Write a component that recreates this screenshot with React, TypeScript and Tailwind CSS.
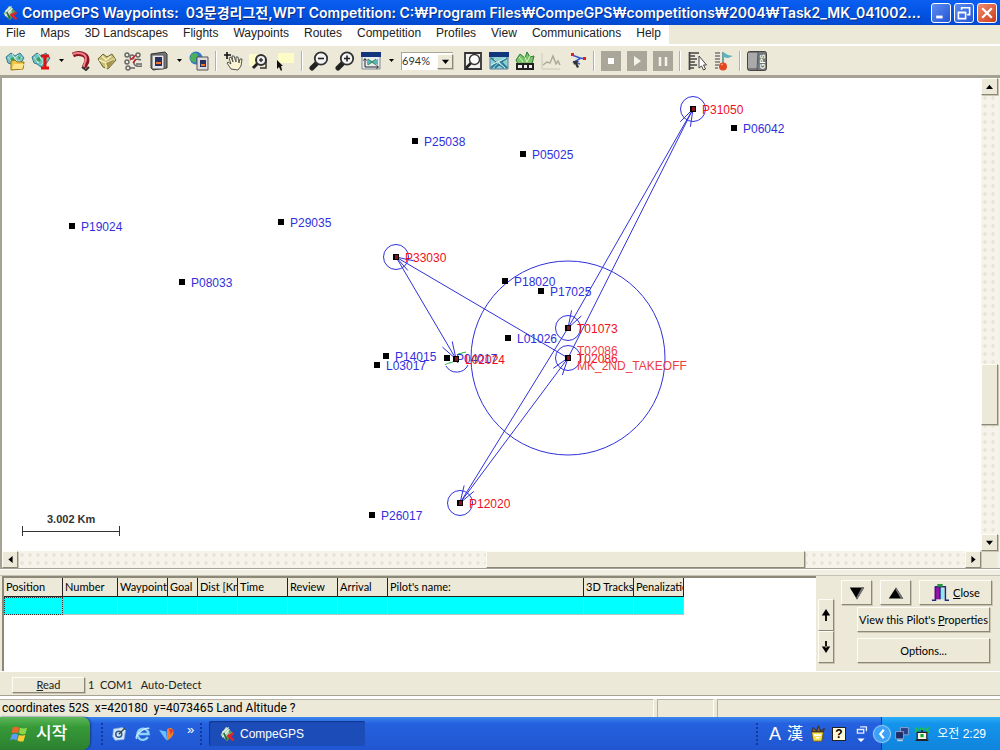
import type { ReactNode } from "react";
import { clsx } from "clsx";

type Waypoint = { name: string; x: number; y: number; turn?: boolean };
type Leg = { from: [number, number]; to: [number, number] };

const MENUS = [
  "File",
  "Maps",
  "3D Landscapes",
  "Flights",
  "Waypoints",
  "Routes",
  "Competition",
  "Profiles",
  "View",
  "Communications",
  "Help",
];

// Positions are in map units, measured from the top left of the map canvas
const WAYPOINTS: Waypoint[] = [
  { name: "P25038", x: 413, y: 63 },
  { name: "P05025", x: 521, y: 76 },
  { name: "P06042", x: 732, y: 50 },
  { name: "P19024", x: 70, y: 148 },
  { name: "P29035", x: 279, y: 144 },
  { name: "P08033", x: 180, y: 204 },
  { name: "P18020", x: 503, y: 203 },
  { name: "P17025", x: 539, y: 213 },
  { name: "L01026", x: 506, y: 260 },
  { name: "P14015", x: 384, y: 278 },
  { name: "L03017", x: 375, y: 287 },
  { name: "P04017", x: 445, y: 280 },
  { name: "P26017", x: 370, y: 437 },
  { name: "P31050", x: 691, y: 31, turn: true },
  { name: "P33030", x: 394, y: 179, turn: true },
  { name: "L02024", x: 454, y: 281, turn: true },
  { name: "T01073", x: 566, y: 250, turn: true },
  { name: "T02086", x: 566, y: 280, turn: true },
  { name: "P12020", x: 458, y: 425, turn: true },
];

const LEGS: Leg[] = [
  { from: [566, 280], to: [691, 31] },
  { from: [691, 31], to: [566, 250] },
  { from: [566, 250], to: [458, 425] },
  { from: [458, 425], to: [566, 280] },
  { from: [566, 280], to: [394, 179] },
  { from: [394, 179], to: [454, 281] },
];

const COLUMNS = [
  { title: "Position", width: "w-[59px]" },
  { title: "Number", width: "w-[55px]" },
  { title: "Waypoints", width: "w-[50px]" },
  { title: "Goal", width: "w-[30px]" },
  { title: "Dist [Km]", width: "w-[40px]" },
  { title: "Time", width: "w-[50px]" },
  { title: "Review", width: "w-[50px]" },
  { title: "Arrival", width: "w-[50px]" },
  { title: "Pilot's name:", width: "w-[196px]" },
  { title: "3D Tracks", width: "w-[50px]" },
  { title: "Penalization", width: "w-[50px]" },
];

const RAISED =
  "border border-t-[#fdfcf5] border-l-[#fdfcf5] border-r-[#8b8877] border-b-[#8b8877] bg-[#ece9d8] shadow-[1px_1px_0_#c9c5b2]";

const SMALL = "font-['Lato','Noto_Sans_CJK_KR',sans-serif] text-[11px]";

function Icon({ children, size = 20 }: { children: ReactNode; size?: number }) {
  return (
    <svg width={size} height={size} viewBox="0 0 20 20" fill="none" aria-hidden="true" className="shrink-0">
      {children}
    </svg>
  );
}

function Tool({ label, children }: { label: string; children: ReactNode }) {
  return (
    <button type="button" aria-label={label} className="flex h-6 w-[26px] shrink-0 items-center justify-center">
      <Icon>{children}</Icon>
    </button>
  );
}

function DropArrow({ label }: { label: string }) {
  return (
    <button type="button" aria-label={label} className="flex h-6 w-[14px] shrink-0 items-center justify-center">
      <svg width="5" height="3" viewBox="0 0 5 3" aria-hidden="true">
        <path d="M0 0h5L2.500 3z" fill="#000" />
      </svg>
    </button>
  );
}

function Separator() {
  return (
    <div className="flex w-2 shrink-0 justify-center">
      <div className="h-5 w-[2px] border-l border-[#b5b2a2] bg-white" />
    </div>
  );
}

function Triangle({ dir, size = 7 }: { dir: "up" | "down" | "left" | "right"; size?: number }) {
  const paths = {
    up: "M0 8.500L5 2.500l5 6z",
    down: "M0 2.500h10L5 8.500z",
    left: "M8 0v10L2 5z",
    right: "M2 0v10l6-5z",
  };
  return (
    <svg width={size} height={size} viewBox="0 0 10 10" aria-hidden="true">
      <path d={paths[dir]} fill="#000" />
    </svg>
  );
}

function MapSheet() {
  return (
    <>
      <path d="M1 6l5-4 4 3 5-3 4 5-4 6-5 3-4-3-3-1z" fill="#6fc3c0" stroke="#3a7890" />
      <path d="M3 6l5 6M7 3l7 10M13 4l-7 8M17 6l-7 8" stroke="#c9ecdc" />
      <path d="M5 8l3-2 2 3-2 2zM13 5l3 2-2 2z" fill="#3a9f54" />
    </>
  );
}

function Magnifier({ sign }: { sign: ReactNode }) {
  return (
    <>
      <path d="M7.500 12.500L3 17" stroke="#222" strokeWidth="5" strokeLinecap="round" />
      <circle cx="12" cy="7.500" r="6.200" fill="#f3f3f3" stroke="#333" strokeWidth="1.800" />
      <path d="M8 6a4 4 0 0 1 3-3" stroke="#fff" />
      {sign}
    </>
  );
}

function CompeLogo({ size = 16 }: { size?: number }) {
  return (
    <Icon size={size}>
      <path d="M9 1l9 8-8 10-8-8z" fill="#5aa060" />
      <path d="M9 1l4 8-6 7-5-5z" fill="#a9cfae" />
      <path d="M4 8l8-6M4 14l9-10" stroke="#f1f5ee" strokeWidth="1.500" />
      <path d="M11 11l7 7M18 9l-7 5" stroke="#e0242c" strokeWidth="3" />
      <path d="M6 9l4 8" stroke="#24663a" strokeWidth="2" />
    </Icon>
  );
}

function TitleBar() {
  const caption = "flex size-5 items-center justify-center rounded-[3px] border border-white";
  return (
    <header className="flex h-[25px] items-center gap-1 bg-linear-to-b from-[#0b5ff0] via-[#0254e4] to-[#0349cf] pr-[3px] pl-[2px]">
      <CompeLogo />
      <h1 className="min-w-0 flex-1 overflow-hidden font-['Inter','Noto_Sans_CJK_KR',sans-serif] text-[14px] leading-5 font-semibold whitespace-pre text-white [text-shadow:1px_1px_0_#0a2a80]">
        {"CompeGPS Waypoints:  03문경리그전,WPT Competition: C:₩Program Files₩CompeGPS₩competitions₩2004₩Task2_MK_041002..."}
      </h1>
      <div className="flex gap-[3px]">
        <button type="button" aria-label="Minimize" className={clsx(caption, "bg-linear-to-br from-[#5f8cf0] to-[#2454d6]")}>
          <Icon size={16}>
            <path d="M4 15h8" stroke="#fff" strokeWidth="3.500" />
          </Icon>
        </button>
        <button type="button" aria-label="Restore" className={clsx(caption, "bg-linear-to-br from-[#5f8cf0] to-[#2454d6]")}>
          <Icon size={16}>
            <path d="M7 6V3.500h10V12h-3M7 3.500h10" stroke="#fff" strokeWidth="2" />
            <path d="M3 9h9v8H3zM3 9.500h9" stroke="#fff" strokeWidth="2" />
          </Icon>
        </button>
        <button type="button" aria-label="Close window" className={clsx(caption, "bg-linear-to-br from-[#ef8a6c] to-[#cc3a14]")}>
          <Icon size={16}>
            <path d="M4 4l12 12M16 4L4 16" stroke="#fff" strokeWidth="2.800" />
          </Icon>
        </button>
      </div>
    </header>
  );
}

function MenuBar() {
  return (
    <nav className="flex h-[21px] border-b-2 border-white bg-[#ece9d8]">
      <div className="flex h-5 items-start gap-[15px] bg-white pr-2 pl-[6px] text-[12px] leading-4 text-[#222]">
        {MENUS.map((m) => (
          <button key={m} type="button" className="whitespace-nowrap">
            {m}
          </button>
        ))}
      </div>
    </nav>
  );
}

function Toolbar() {
  return (
    <div role="toolbar" className="flex h-8 items-center border-b-[3px] border-[#a5a294] bg-[#ece9d8] pl-[2px]">
      <Tool label="Open map">
        <MapSheet />
        <path d="M6 19V10l4-1 2 2h7l-1 7z" fill="#f3c64c" stroke="#9a741a" />
        <path d="M7 18l2-5h10l-2 5z" fill="#ffe48a" />
      </Tool>
      <Tool label="Map information">
        <MapSheet />
        <path d="M10 5h8M10 17h8M14 5v12" stroke="#e01010" strokeWidth="3" />
      </Tool>
      <DropArrow label="More maps" />
      <Tool label="Open track">
        <path d="M2 4c6-3 14-1 14 5 0 4-3 4-2 8" stroke="#8d1420" strokeWidth="5" />
        <path d="M2 3c6-2 13-1 13 5 0 4-3 5-2 8" stroke="#f0808a" strokeWidth="2" />
        <path d="M11 16l4 3 3-3" stroke="#333" strokeWidth="2" />
      </Tool>
      <Tool label="Open waypoints">
        <path d="M1 8l5-5 4 3 5-3 4 6-8 9-5-2z" fill="#c9bd72" stroke="#6e6530" />
        <path d="M2 9l7 3 9-4M9 12v6M5 5l4 4 5-4" stroke="#f6efc0" strokeWidth="1.500" />
        <path d="M9 12l9-4-7 10z" fill="#a3964a" />
      </Tool>
      <Tool label="Routes">
        <g stroke="#666" strokeWidth="1.400">
          <circle cx="4" cy="4" r="2" />
          <circle cx="9" cy="6" r="2" />
          <circle cx="4" cy="11" r="2" />
          <circle cx="5" cy="17" r="2" />
          <circle cx="15" cy="4" r="2" />
          <path d="M18 9c-5-2-7 0-7 3s4 4 8 3M13 13h6M7 17h5" />
        </g>
        <path d="M7 9l6-5M10 12l3-4" stroke="#d3202a" strokeWidth="1.500" />
      </Tool>
      <Tool label="3D view">
        <path d="M2 3l14-2 2 2v14l-14 2-2-2z" fill="#77777c" stroke="#333" />
        <path d="M3 4h12v14H3z" fill="#e6e6e6" stroke="#555" />
        <path d="M6 6h7v9H6z" fill="#29305c" />
        <path d="M7 12h5" stroke="#f07030" strokeWidth="2" />
      </Tool>
      <DropArrow label="More views" />
      <Tool label="Maps from internet">
        <circle cx="7" cy="7" r="6.500" fill="#3478c8" />
        <path d="M2 4c3-3 6-2 7 0s-3 3-2 6-5 1-6-2z" fill="#4cb05a" />
        <path d="M8 6h11v13H8z" fill="#dcdcdc" stroke="#555" />
        <path d="M11 9h6v7h-6z" fill="#29305c" />
        <path d="M12 14h4" stroke="#f07030" strokeWidth="2" />
      </Tool>
      <Separator />
      <Tool label="Pan">
        <path d="M8 18L4 12l1-1 3 2-2-6 2-1 2 5-1-6h2l2 6V6h2l1 6 1-4h2l-1 7-3 4z" fill="#fdf5d2" stroke="#555" />
        <path d="M4 1v7M1 4h7" stroke="#111" strokeWidth="1.600" />
      </Tool>
      <Tool label="Zoom window">
        <path d="M0 3h17v12H0z" fill="#fdfbc6" />
        <path d="M9 12l-5 5" stroke="#222" strokeWidth="3" />
        <circle cx="12" cy="9" r="5" fill="#eee" stroke="#333" strokeWidth="2" />
        <path d="M10 9h4M12 7v4M11 17h6V8" stroke="#333" strokeWidth="1.500" />
      </Tool>
      <Tool label="Select">
        <path d="M3 2h16v10H3z" fill="#fdfbc6" />
        <path d="M2 9v9l2-2 2 4 1-1-1-4h2z" fill="#111" />
      </Tool>
      <Separator />
      <Tool label="Zoom out">
        <Magnifier sign={<path d="M9 7.500h6" stroke="#222" strokeWidth="1.600" />} />
      </Tool>
      <Tool label="Zoom in">
        <Magnifier sign={<path d="M9 7.500h6M12 4.500v6" stroke="#222" strokeWidth="1.600" />} />
      </Tool>
      <Tool label="Scale window">
        <path d="M1 2h18v16H1z" fill="#e9edf0" stroke="#7d8794" />
        <path d="M0 1h20v5H0z" fill="#12357c" />
        <path d="M6 8l5 2 6-2v6l-6-2-5 2z" fill="#5cb3bb" />
        <path d="M7 8l8 6M15 8l-8 6" stroke="#3a8a50" />
        <path d="M4 8v8h13M2.500 9.500L4 7.500l1.500 2M15.500 14.500l2 1.500-2 1.500" stroke="#222" />
      </Tool>
      <DropArrow label="More scales" />
      <div className="relative mx-[3px] h-[18px] w-[52px] shrink-0">
        <select
          aria-label="Zoom level"
          defaultValue="694"
          className={clsx(SMALL, "block h-[18px] w-full appearance-none border-t border-l border-[#aaa795] bg-white leading-4 text-[#333]")}
        >
          <option value="694">694%</option>
          <option value="100">100%</option>
        </select>
        <span className={clsx(RAISED, "pointer-events-none absolute top-[2px] right-0 flex h-[15px] w-4 items-center justify-center")}>
          <Triangle dir="down" />
        </span>
      </div>
      <div className="w-1 shrink-0" />
      <Tool label="Fit to window">
        <path d="M2 2h16v16H2z" fill="#f1f1ee" stroke="#333" strokeWidth="1.800" />
        <path d="M8 12l-5 5" stroke="#222" strokeWidth="2.600" />
        <circle cx="11.500" cy="8.500" r="5" fill="#fff" stroke="#333" strokeWidth="1.400" />
      </Tool>
      <Tool label="Map window">
        <path d="M1 2h18v16H1z" fill="#8fd0d0" stroke="#5a7a9c" />
        <path d="M0 1h20v5H0z" fill="#12357c" />
        <path d="M2 7l6 4-6 6M18 7l-6 4 6 6M6 17l4-4 5 4" stroke="#2e7c9c" strokeWidth="2" />
        <path d="M2 14L17 7M5 8l11 9" stroke="#dff3ec" />
      </Tool>
      <Tool label="Send to device">
        <path d="M1 9l4-6 5 4 2-6 3 5 4-1-2 8H3z" fill="#7cc36a" stroke="#2f7a38" />
        <path d="M4 6l4 5M9 4l3 7M15 5l-3 6" stroke="#d8f3c8" />
        <path d="M1 12h18v7H1z" fill="#222" />
        <path d="M3 14h4v3H3zM9 14h3v3H9zM14 14h3v3h-3z" fill="#eee" />
      </Tool>
      <Tool label="Graph">
        <path d="M1 2v16h18" stroke="#c9c6b6" />
        <path d="M2 14l4-3 3 1 3-7 3 8 2-3 2 4" stroke="#aaa89a" strokeWidth="1.400" />
      </Tool>
      <Tool label="Edit route">
        <path d="M5 4l8 3 6 1M14 7l-7 4 6 2" stroke="#3658c8" strokeWidth="1.500" />
        <path d="M4 2h3v3H4zM16 6h3v3h-3z" fill="#e02020" />
        <path d="M6 10h6l-2 2 2 4-2 1-2-4-1 1z" fill="#333" />
      </Tool>
      <Separator />
      <Tool label="Stop">
        <path d="M0 0h20v20H0z" fill="#aaa79a" />
        <path d="M7 7h6v6H7z" fill="#fff" />
      </Tool>
      <Tool label="Play">
        <path d="M0 0h20v20H0z" fill="#aaa79a" />
        <path d="M7 5v10l7-5z" fill="#f4f3ea" />
      </Tool>
      <Tool label="Pause">
        <path d="M0 0h20v20H0z" fill="#aaa79a" />
        <path d="M7 6v9M13 6v9" stroke="#f4f3ea" strokeWidth="2.500" />
      </Tool>
      <Separator />
      <Tool label="Ruler">
        <path d="M2 2h10M2 5h6M2 8h8M2 11h6M2 14h8M2 17h5M2.500 1v18" stroke="#444" strokeWidth="1.700" />
        <path d="M12 5v12l2.500-2 2 4 2-1-2-4h3z" fill="#fff" stroke="#444" />
      </Tool>
      <Tool label="Flag marker">
        <path d="M2 2h5M2 5h5M2 8h5M2 11h5M2 14h4M2 17h3" stroke="#777" strokeWidth="1.500" />
        <path d="M10 1v14" stroke="#4a8a94" strokeWidth="1.500" />
        <path d="M10 1l5 3 5 1-5 2-5-1z" fill="#5bb4bc" />
        <circle cx="10" cy="15.500" r="4" fill="#e44820" />
        <path d="M8 14l2-1" stroke="#ffb89a" />
      </Tool>
      <Separator />
      <Tool label="GPS receiver">
        <rect x="0.500" y="0.500" width="19" height="19" rx="2" fill="#777" stroke="#444" />
        <path d="M1 2h10v15H1z" fill="#aaa" />
        <path d="M11 1l-1 18" stroke="#555" />
        <text x="3" y="18" fontSize="7" fontWeight="bold" fill="#fff" transform="rotate(-90 3 18) translate(0 15)">
          GPS
        </text>
      </Tool>
    </div>
  );
}

// Two short strokes folded back from the end of a leg
function arrowHead([x1, y1]: [number, number], [x2, y2]: [number, number]) {
  const angle = Math.atan2(y2 - y1, x2 - x1);
  const tip = (turn: number) =>
    `${x2 - 18 * Math.cos(angle + turn)} ${y2 - 18 * Math.sin(angle + turn)}`;
  return `M${tip(0.32)}L${x2} ${y2}L${tip(-0.32)}`;
}

function RouteMap() {
  return (
    <svg className="absolute inset-0 h-full w-full" role="img" aria-label="Competition task map" fontSize="12">
      <g fill="none" stroke="#3030dc">
        {LEGS.map(({ from, to }, i) => (
          <g key={i}>
            <path d={`M${from.join(" ")}L${to.join(" ")}`} />
            <path d={arrowHead(from, to)} />
          </g>
        ))}
        <circle cx="566" cy="280" r="97" />
        <circle cx="691" cy="31" r="12.500" />
        <circle cx="394" cy="179" r="12.500" />
        <circle cx="566" cy="250" r="12.500" />
        <circle cx="566" cy="280" r="12.500" />
        <circle cx="458" cy="425" r="12.500" />
        <path d="M444 288a12.500 12.500 0 0 0 22-1" />
        <path d="M443 287c3-3 7-1 10-5M456 276l8-2" stroke="#20b048" />
      </g>
      {WAYPOINTS.map(({ name, x, y, turn }) => (
        <g key={name}>
          <rect x={x - 3} y={y - 3} width="6" height="6" fill="#000" />
          {turn && <rect x={x - 1} y={y - 2} width="3" height="4" fill="#8c1420" />}
          <text x={x + 9} y={y + 5} fill={turn ? "#f01020" : "#3030dc"}>
            {name}
          </text>
        </g>
      ))}
      <g fill="#f03c44">
        <text x="575" y="277">T02086</text>
        <text x="575" y="292">MK_2ND_TAKEOFF</text>
      </g>
      {/* Scale bar */}
      <path d="M20 453.500h97M20.500 448v10M117.500 448v10" stroke="#333" fill="none" />
      <text x="45" y="445" fontSize="11" fontWeight="bold" fill="#333">
        3.002 Km
      </text>
    </svg>
  );
}

const TRACK = "bg-[#f5f3ea] bg-[radial-gradient(#eae7da_2px,transparent_2px)] bg-[size:8px_8px]";

function MapPanel() {
  return (
    <main className="grid min-h-[300px] flex-1 grid-cols-[1fr_17px] grid-rows-[1fr_17px] border-r-2 border-l-2 border-r-[#f4f2e8] border-l-[#a5a294] bg-[#ece9d8]">
      <div className="relative overflow-hidden bg-white">
        <RouteMap />
      </div>
      <div className={clsx("flex flex-col", TRACK)}>
        <button type="button" aria-label="Scroll up" className={clsx(RAISED, "flex h-[17px] items-center justify-center")}>
          <Triangle dir="up" />
        </button>
        <div className="flex-[271]" />
        <div className={clsx(RAISED, "flex-[59]")} />
        <div className="flex-[110]" />
        <button type="button" aria-label="Scroll down" className={clsx(RAISED, "flex h-[17px] items-center justify-center")}>
          <Triangle dir="down" />
        </button>
      </div>
      <div className={clsx("flex", TRACK)}>
        <button type="button" aria-label="Scroll left" className={clsx(RAISED, "flex w-4 items-center justify-center")}>
          <Triangle dir="left" />
        </button>
        <div className="flex-[469]" />
        <div className={clsx(RAISED, "flex-[318]")} />
        <div className="flex-[160]" />
        <button type="button" aria-label="Scroll right" className={clsx(RAISED, "flex w-4 items-center justify-center")}>
          <Triangle dir="right" />
        </button>
      </div>
    </main>
  );
}

function PilotTable() {
  return (
    <div className="min-w-0 flex-1 overflow-hidden border-t-2 border-l-2 border-[#8b8877] bg-white">
      <table className="w-[680px] table-fixed border-separate border-spacing-0 text-left">
        <thead>
          <tr className="bg-[#ece9d8]">
            {COLUMNS.map(({ title, width }) => (
              <th
                key={title}
                className={clsx(width, SMALL, "h-[19px] overflow-hidden border-r border-b border-[#222] p-0 pl-[2px] leading-4 font-normal whitespace-nowrap")}
              >
                {title}
              </th>
            ))}
          </tr>
        </thead>
        <tbody>
          <tr className="bg-[#00ffff]">
            {COLUMNS.map(({ title }, i) => (
              <td
                key={title}
                className={clsx("h-[18px] border-r border-b border-[#b0c4c4] p-0", i === 0 && "outline outline-dotted -outline-offset-1 outline-[#333]")}
              />
            ))}
          </tr>
        </tbody>
      </table>
    </div>
  );
}

function PilotPanel() {
  const button = clsx(RAISED, SMALL, "flex items-center justify-center leading-4");
  return (
    <section className="flex h-[104px] flex-col border-t border-b border-t-[#a5a294] border-b-white bg-[#ece9d8]">
      <div className="h-[7px] shrink-0 border-t border-b border-t-white border-b-[#c5c2b2] bg-[#f1efe4]" />
      <div className="flex min-h-0 flex-1 pr-2 pl-[2px]">
        <PilotTable />
        <div className="flex w-[25px] flex-col pt-[23px] pr-[7px] pl-[2px]">
          <button type="button" aria-label="Previous pilot" className={clsx(button, "h-8")}>
            <Icon size={12}>
              <path d="M10 0l7 11H3zM8.500 9h3v11h-3z" fill="#000" />
            </Icon>
          </button>
          <button type="button" aria-label="Next pilot" className={clsx(button, "h-8")}>
            <Icon size={12}>
              <path d="M10 20l7-11H3zM8.500 0h3v11h-3z" fill="#000" />
            </Icon>
          </button>
        </div>
        <div className="flex w-[151px] flex-col pt-1">
          <div className="flex justify-between">
            <button type="button" aria-label="Move down" className={clsx(button, "h-[25px] w-[31px]")}>
              <Icon size={16}>
                <path d="M1 3h18l-9 15z" fill="#000" />
                <path d="M16 3h3l-9 15-1-2z" fill="#777" />
              </Icon>
            </button>
            <button type="button" aria-label="Move up" className={clsx(button, "h-[25px] w-[31px]")}>
              <Icon size={16}>
                <path d="M1 17h18L10 3z" fill="#000" />
                <path d="M16 17h3L10 3l-1 2z" fill="#777" />
              </Icon>
            </button>
            <button type="button" className={clsx(button, "h-[25px] w-[73px] gap-1")}>
              <Icon size={18}>
                <path d="M4 3h6v14H4z" fill="#a010a8" />
                <path d="M10 5h5v12h-5z" fill="#8fe6f4" />
                <path d="M1 18h4V3h11v15h4M10 4v13" stroke="#1c2c7c" strokeWidth="1.600" />
                <path d="M7 0h6v3H7z" fill="#28963c" />
              </Icon>
              <span>
                <u>C</u>lose
              </span>
            </button>
          </div>
          <button type="button" className={clsx(button, "mt-[2px] mr-[2px] ml-[16px] h-[25px] whitespace-nowrap")}>
            <span>
              View this Pilot's <u>P</u>roperties
            </span>
          </button>
          <button type="button" className={clsx(button, "mt-[6px] mr-[2px] ml-[16px] h-[25px]")}>
            Options...
          </button>
        </div>
      </div>
    </section>
  );
}

function StatusBars() {
  return (
    <footer className="bg-[#ece9d8]">
      <div className={clsx(SMALL, "flex h-6 items-center gap-[3px] border-b border-[#a5a294] pt-[2px] pl-3 leading-4 text-[#222]")}>
        <button type="button" className={clsx(RAISED, "h-4 w-[73px] leading-3")}>
          <u>R</u>ead
        </button>
        <span className="whitespace-pre">{"1  COM1   Auto-Detect"}</span>
      </div>
      <div className="flex h-[21px] gap-[3px] border-t-[3px] border-white text-[12px] leading-4">
        <div className="min-w-0 flex-1 overflow-hidden border-t border-r border-t-[#b5b2a2] border-r-white pl-[2px] font-['Roboto',sans-serif] whitespace-pre">
          {"coordinates 52S  x=420180  y=4073465 Land Altitude ?"}
        </div>
        <div className="w-[57px] border-t border-r border-l border-[#b5b2a2] border-r-white" />
        <div className="w-[283px] border-t border-l border-[#b5b2a2]" />
      </div>
    </footer>
  );
}

function Grip() {
  return <div className="h-6 w-1 bg-[radial-gradient(#123a9c_1px,transparent_1px)] bg-[size:4px_4px]" />;
}

function Taskbar() {
  return (
    <div className="flex h-[33px] items-stretch bg-linear-to-b from-[#3b86ee] via-[#2561df] via-20% to-[#2056d0] text-white">
      <button
        type="button"
        className="flex w-[90px] items-center gap-2 rounded-r-[8px] bg-linear-to-b from-[#5cb85a] via-[#379a38] via-30% to-[#2c8030] pl-[10px] text-[17px] leading-5 font-medium shadow-[1px_0_2px_#163a80]"
      >
        <Icon size={18}>
          <path d="M3 3c3-2 5-1 7 0l-1 6c-3-1-5-1-7 0z" fill="#f0642c" />
          <path d="M11 3c3 1 5 1 8 0l-2 7c-3 1-5 0-7-1z" fill="#8cd84c" />
          <path d="M2 11c2-2 5-1 7 0l-2 6c-2-1-4-2-7 0z" fill="#5c9cff" />
          <path d="M10 11c2 1 4 1 7 0l-2 7c-3 1-5 0-7-1z" fill="#fccc30" />
        </Icon>
        시작
      </button>
      <div className="flex w-[119px] items-center pl-[10px]">
        <Grip />
        <div className="ml-2 flex flex-1 items-center gap-2">
          <button type="button" aria-label="Show desktop">
            <Icon size={15}>
              <path d="M2 4l12-2 4 4-2 12-12 1-3-5z" fill="#d6e8f8" stroke="#8cb0dc" />
              <circle cx="9" cy="11" r="4" stroke="#2b5c9c" strokeWidth="2" />
              <path d="M9 11l8-8" stroke="#444" strokeWidth="2" />
            </Icon>
          </button>
          <button type="button" aria-label="Internet Explorer">
            <Icon size={16}>
              <path d="M16 14a7 7 0 1 1 1-4H5" stroke="#8fd4fc" strokeWidth="3" />
              <path d="M2 16C-1 12 12 1 18 3" stroke="#d6f0ff" strokeWidth="1.500" />
            </Icon>
          </button>
          <button type="button" aria-label="Media">
            <Icon size={16}>
              <path d="M0 5l7 10 3 3-1-11z" fill="#6cc0f8" />
              <path d="M10 4c5-4 9 0 8 5s-5 8-8 9z" fill="#f08030" />
              <path d="M12 3l6 2-3 6z" fill="#e03838" />
            </Icon>
          </button>
          <span className="-mt-2 ml-1 text-[13px] leading-4">»</span>
        </div>
        <Grip />
        <div className="w-[6px]" />
      </div>
      <button type="button" className="my-1 flex w-[156px] items-center gap-[5px] rounded-[2px] bg-[#1c4cb8] pl-[10px] text-[12px] leading-4 shadow-[inset_1px_1px_1px_#12368c]">
        <CompeLogo />
        CompeGPS
      </button>
      <div className="flex-1" />
      <div className="flex items-center gap-[6px] pr-[11px]">
        <Grip />
        <span className="ml-1 text-[18px] leading-5">A</span>
        <span className="text-[16px] leading-5">漢</span>
        <Icon size={17}>
          <path d="M3 8h14l-2 11H5z" fill="#f4e04c" stroke="#6c4c10" />
          <path d="M3 8l2-5 4 4 2-6 3 6 4-3-1 4z" fill="#8c5a2c" stroke="#222" />
          <path d="M6 12h8M8 15h4" stroke="#fff" strokeWidth="2" />
        </Icon>
        <span className="flex size-[14px] items-center justify-center border border-[#222] bg-[#fffbd8] text-[12px] leading-3 font-bold text-black">?</span>
        <Icon size={18}>
          <path d="M9 2h7v5M6 5h7v4H6z" stroke="#e0ecff" strokeWidth="1.500" />
          <path d="M6 15h8l-4 4z" fill="#fff" />
        </Icon>
      </div>
      <div className="flex w-[119px] items-center gap-1 border-l border-[#0c3c9c] bg-linear-to-b from-[#2cb0f8] via-[#1494ec] via-20% to-[#1084dc] pr-[14px]">
        <button type="button" aria-label="Show hidden icons" className="-ml-2 flex size-4 shrink-0 items-center justify-center rounded-full bg-[#3ca0f4] shadow-[0_0_1px_1px_#a8d8fc]">
          <Icon size={12}>
            <path d="M13 3l-6 7 6 7" stroke="#fff" strokeWidth="3.500" />
          </Icon>
        </button>
        <Icon size={16}>
          <path d="M8 2h10v9H8z" fill="#28408c" stroke="#a0b0d4" />
          <path d="M2 7h10v9H2z" fill="#1c2c68" stroke="#a0b0d4" />
          <path d="M4 18h7" stroke="#c8d0e0" strokeWidth="2" />
        </Icon>
        <Icon size={16}>
          <path d="M1 2l4 3-4 3M19 2l-4 3 4 3M7 2l3 3 3-3" stroke="#18c838" strokeWidth="2" />
          <path d="M10 5v4" stroke="#222" strokeWidth="2" />
          <path d="M4 8h12v9H4zM2 18h16" fill="#f4f4e8" stroke="#222" strokeWidth="1.500" />
          <path d="M8 10h4v4H8z" fill="#18a838" />
        </Icon>
        <time className="ml-auto text-[12px] leading-4 whitespace-nowrap">오전 2:29</time>
      </div>
    </div>
  );
}

export default function App() {
  return (
    <div className="flex min-h-screen flex-col bg-[#ece9d8] font-['Liberation_Sans','Noto_Sans_CJK_KR',sans-serif] text-black">
      <TitleBar />
      <MenuBar />
      <Toolbar />
      <MapPanel />
      <PilotPanel />
      <StatusBars />
      <Taskbar />
    </div>
  );
}
